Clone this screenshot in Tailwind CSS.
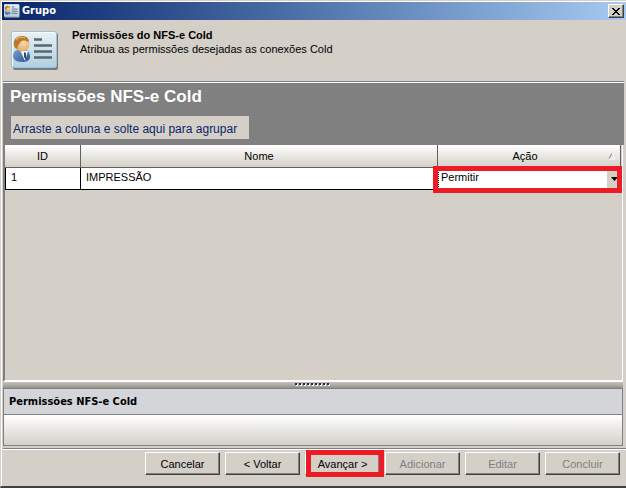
<!DOCTYPE html>
<html lang="pt-BR">

<head>
    <meta charset="UTF-8">
    <meta name="viewport" content="width=device-width, initial-scale=1.0">
    <title>Grupo</title>
    <script src="https://cdn.jsdelivr.net/npm/@tailwindcss/browser@4"></script>
</head>

<body class="bg-[#d4d0c8] font-['Liberation_Sans',Arial,sans-serif] text-[11px] leading-[14px] text-black">
    <svg class="absolute h-0 w-0">
        <defs>
            <linearGradient id="cardFill" x1="0" y1="0" x2="0" y2="1">
                <stop offset="0" stop-color="#e6f2f8" />
                <stop offset="1" stop-color="#b0cfe0" />
            </linearGradient>
            <radialGradient id="faceFill" cx="0.6" cy="0.4" r="0.7">
                <stop offset="0" stop-color="#fbdcae" />
                <stop offset="1" stop-color="#dba45c" />
            </radialGradient>
            <linearGradient id="suitFill" x1="0" y1="0" x2="1" y2="1">
                <stop offset="0" stop-color="#7ba2d6" />
                <stop offset="1" stop-color="#2b4f8c" />
            </linearGradient>
            <symbol id="card" viewBox="0 0 48 40" preserveAspectRatio="none">
                <rect x="2" y="2" width="45" height="37" rx="2" fill="#6f7f88" />
                <rect x="0.5" y="0.5" width="45" height="36" rx="2" fill="url(#cardFill)" stroke="#a3bfce" />
                <path d="M1.500 35V2.500a1 1 0 0 1 1-1H44" fill="none" stroke="#f8fcfe" />
                <path d="M2 25C2 20 6 18 11 18s8 3 8 8c0 3-3 5-8 5-6 0-9-3-9-6z" fill="url(#suitFill)" />
                <path d="M9 19l5 11 3-10z" fill="#f4f8fc" />
                <path d="M13 21l2 1v7l-2-3z" fill="#34486e" />
                <circle cx="11" cy="13" r="7.500" fill="url(#faceFill)" />
                <path d="M3 14C2 8 6 5 11 5c4 0 7 2 7 6-3-1-5-2-7-1-2 0-2 3-4 4l-1 4c-2-1-3-2-3-4z" fill="#b9782a" />
                <path d="M5 9c2-3 6-3 9-2" fill="none" stroke="#e0a75a" stroke-width="1.500" />
                <path d="M23 8.500h8M23 14.500h18M23 20.500h18M23 26.500h18" stroke="#5c666d" stroke-width="2.500" />
            </symbol>
        </defs>
    </svg>

    <div class="flex min-h-screen flex-col border-b-2 border-[#404040] border-l border-l-[#d4d0c8] pt-px">
        <div class="flex grow flex-col border-t border-l border-white">

            <!-- Title bar -->
            <header class="flex h-[18px] items-center bg-linear-to-r from-[#0a246a] to-[#a6caf0] px-[2px]">
                <svg class="h-[14px] w-4"><use href="#card" /></svg>
                <h1 class="ml-[2px] grow font-['DejaVu_Sans_Condensed','DejaVu_Sans',sans-serif] font-bold text-white">Grupo</h1>
                <button type="button" aria-label="Fechar" class="flex h-[14px] w-4 items-center justify-center border border-t-white border-r-[#404040] border-b-[#404040] border-l-white bg-[#d4d0c8] shadow-[inset_-1px_-1px_0_#808080]">
                    <svg class="h-[7px] w-2" viewBox="0 0 8 7" shape-rendering="crispEdges"><path d="M0 0h2v1h1v1h2V1h1V0h2v1H7v1H6v1H5v1h1v1h1v1h1v1H6V6H5V5H3v1H2v1H0V6h1V5h1V4h1V3H2V2H1V1H0z" /></svg>
                </button>
            </header>

            <!-- Wizard heading -->
            <section class="flex h-[61px] pt-[11px] pl-[9px]">
                <svg class="h-10 w-12"><use href="#card" /></svg>
                <div class="-mt-[3px] ml-[13px]">
                    <h2 class="font-bold">Permissões do NFS-e Cold</h2>
                    <p class="pl-2">Atribua as permissões desejadas as conexões Cold</p>
                </div>
            </section>

            <main class="mr-[2px] ml-px border-t border-[#808080]">
                <div class="border-t border-white">
                    <div class="flex h-[62px] flex-col items-start bg-[#808080] pt-1 pl-[7px]">
                        <h2 class="text-[17px] leading-[19px] font-bold text-white">Permissões NFS-e Cold</h2>
                        <div class="mt-[10px] ml-px flex h-[23px] w-[238px] items-center bg-[#d4d0c8] pt-[2px] pl-[2px] text-[12px] whitespace-nowrap text-[#0a246a]">Arraste a coluna e solte aqui para agrupar</div>
                    </div>

                    <!-- Grid -->
                    <div class="relative mr-px h-[237px] border-r border-b-2 border-l-2 border-r-white border-b-white border-l-[#808080] pr-px">
                        <table class="w-full table-fixed border-separate border-spacing-0">
                            <thead>
                                <tr class="h-[23px]">
                                    <th class="w-[76px] border-r border-b border-[#606060] bg-linear-to-b from-white to-[#d4d0c8] font-normal">ID</th>
                                    <th class="border-r border-b border-[#606060] bg-linear-to-b from-white to-[#d4d0c8] font-normal">Nome</th>
                                    <th class="w-[183px] border-r border-b border-[#606060] bg-linear-to-b from-white to-[#d4d0c8] font-normal">
                                        <div class="flex items-center">
                                            <span class="grow pl-1">Ação</span>
                                            <svg class="mr-1 h-2 w-2" viewBox="0 0 8 8" fill="none"><path d="M1 7L4 1" stroke="#808080" /><path d="M4 1l3 6H1" stroke="#fff" /></svg>
                                        </div>
                                    </th>
                                </tr>
                            </thead>
                            <tbody>
                                <tr class="h-[22px] bg-white align-top">
                                    <td class="border-r border-b border-l border-black pt-[2px] pl-[5px]">1</td>
                                    <td class="border-r border-b border-black pt-[2px] pl-[5px]">IMPRESSÃO</td>
                                    <td class="border-b border-black">
                                        <div class="relative flex h-[21px]">
                                            <select aria-label="Ação" class="grow appearance-none border-l border-dotted border-black pb-1 pl-[2px] leading-[14px]">
                                                <option>Permitir</option>
                                            </select>
                                            <span class="pointer-events-none flex w-[14px] items-center justify-center bg-[#d4d0c8]">
                                                <svg class="h-1 w-[7px]" viewBox="0 0 7 4"><path d="M0 0h7L3.500 4z" /></svg>
                                            </span>
                                        </div>
                                    </td>
                                </tr>
                            </tbody>
                        </table>
                        <div class="pointer-events-none absolute top-[21px] right-0 h-[27px] w-[189px] border-5 border-[#ed1c24]"></div>
                    </div>

                    <!-- Splitter -->
                    <div class="mr-px flex h-[7px] justify-center border-b border-[#808080] bg-linear-to-b from-[#c8c4bc] to-[#95928c] pt-px">
                        <svg class="h-[3px] w-9" viewBox="0 0 36 3" shape-rendering="crispEdges">
                            <path d="M1 2h35" stroke="#fff" stroke-width="2" stroke-dasharray="2 2" />
                            <path d="M0 1h35" stroke="#222c48" stroke-width="2" stroke-dasharray="2 2" />
                        </svg>
                    </div>

                    <section class="mr-px border-r border-b border-l border-[#808080]">
                        <h3 class="flex h-[26px] items-center border-b border-[#808080] bg-[#d4d5d9] pl-[5px] font-['DejaVu_Sans_Condensed','DejaVu_Sans',sans-serif] font-bold">Permissões NFS-e Cold</h3>
                        <div class="h-[30px] bg-linear-to-b from-white to-[#d4d0c8]"></div>
                    </section>
                </div>
            </main>

            <!-- Wizard buttons -->
            <footer class="mt-[2px] ml-px border-t border-[#808080]">
                <div class="flex justify-end gap-[5px] border-t border-white pt-[2px] pr-[6px]">
                    <button type="button" class="h-[23px] w-[75px] border border-t-white border-r-[#404040] border-b-[#404040] border-l-white shadow-[inset_-1px_-1px_0_#808080]">Cancelar</button>
                    <button type="button" class="h-[23px] w-[75px] border border-t-white border-r-[#404040] border-b-[#404040] border-l-white shadow-[inset_-1px_-1px_0_#808080]">&lt; Voltar</button>
                    <div class="relative">
                        <button type="button" class="h-[23px] w-[75px] border border-t-white border-r-[#404040] border-b-[#404040] border-l-white shadow-[inset_-1px_-1px_0_#808080]">Avançar &gt;</button>
                        <div class="pointer-events-none absolute -top-[2px] left-px h-[27px] w-[78px] border-5 border-[#ed1c24]"></div>
                    </div>
                    <button type="button" disabled class="h-[23px] w-[75px] border border-t-white border-r-[#404040] border-b-[#404040] border-l-white text-[#808080] shadow-[inset_-1px_-1px_0_#808080]">Adicionar</button>
                    <button type="button" disabled class="h-[23px] w-[75px] border border-t-white border-r-[#404040] border-b-[#404040] border-l-white text-[#808080] shadow-[inset_-1px_-1px_0_#808080]">Editar</button>
                    <button type="button" disabled class="h-[23px] w-[75px] border border-t-white border-r-[#404040] border-b-[#404040] border-l-white text-[#808080] shadow-[inset_-1px_-1px_0_#808080]">Concluir</button>
                </div>
            </footer>
        </div>
    </div>
</body>

</html>
